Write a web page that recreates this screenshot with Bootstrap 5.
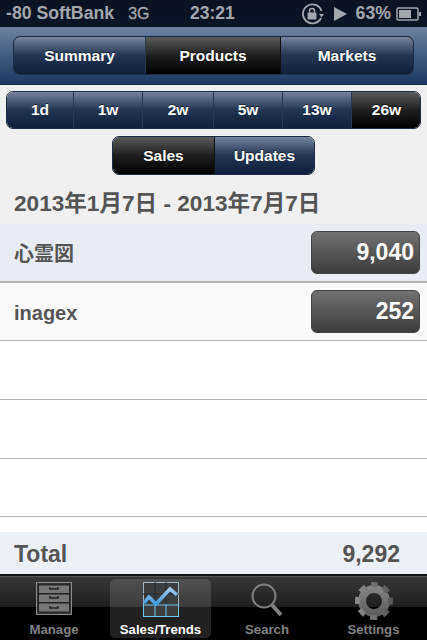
<!DOCTYPE html>
<html lang="en">
<head>
  <meta charset="UTF-8">
  <title>Sales/Trends</title>
  <link href="https://cdn.jsdelivr.net/npm/bootstrap@5.3.3/dist/css/bootstrap.min.css" rel="stylesheet">
  <style>
    body {
      width: 427px;
      height: 640px;
      overflow: hidden;
      background-color: #f0f0f0;
      font-family: "Liberation Sans", "Noto Sans CJK JP", sans-serif;
      font-weight: 700;
    }
    .status-bar {
      height: 27px;
      padding: 0 5px 0 6px;
      background: linear-gradient(#0b1220, #0a1526);
      color: #a3a7ad;
      font-size: 17.700px;
      line-height: 27px;
    }
    .status-net { font-size: 16px; margin-left: 14px; font-weight: 400; -webkit-text-stroke: .3px #a3a7ad; }
    .status-time { position: absolute; left: 190px; top: 0; font-size: 17.500px; }
    .status-right { margin-left: auto; }
    .status-play { margin: 0 9px; }
    .status-pct { margin-right: 5px; }
    .top-header {
      height: 58px;
      padding: 9px 13px 10px;
      background: linear-gradient(#6d819f, #1b3763);
      border-bottom: 1px solid #13294b;
    }
    .seg {
      display: flex;
      overflow: hidden;
      border-radius: 7px;
      border: 1px solid #1d2c44;
      color: #fff;
      font-size: 15.500px;
    }
    .seg-item {
      display: flex;
      flex: 1 1 0;
      align-items: center;
      justify-content: center;
      height: 100%;
      background: linear-gradient(#77849a, #233553 50%, #0f1f3c);
      border-right: 1px solid #2a3950;
      text-shadow: 0 -1px 0 rgba(0,0,0,.5);
    }
    .seg-item:last-child { border-right: 0; }
    .seg-item.on { background: linear-gradient(#5a5a5a, #1e1e1e 50%, #000); border-right-color: #111; }
    .seg-top { height: 39px; background: #1d2c44; }
    .seg-top .seg-item:nth-child(1) { flex: 0 0 132px; }
    .seg-top .seg-item:nth-child(2) { flex: 0 0 135px; }
    .seg-range { height: 38px; margin: 6px 6px 0; }
    .seg-range .seg-item { flex: 0 0 69px; }
    .seg-range .seg-item:nth-child(1) { flex: 0 0 67px; }
    .seg-range .seg-item:nth-child(3) { flex: 0 0 71px; }
    .seg-switch { height: 39px; width: 203px; margin: 7px auto 0; }
    .seg-switch .seg-item:first-child { flex: 0 0 102px; }
    .date-title {
      margin: 17px 0 0 14px;
      height: 32px;
      line-height: 24px;
      font-size: 22.600px;
      font-weight: 700;
      color: #555;
    }
    .sale-row {
      height: 59px;
      padding: 0 7px 0 14px;
      color: #555;
      font-size: 20px;
      border-bottom: 1px solid #b5b5b5;
      background: #fff;
    }
    .sale-name { padding-top: 2px; }
    .row-odd { background: #e9edf3; border-bottom-width: 2px; height: 59px; }
    .row-even { background: #fafafa; height: 58px; }
    .row-blank { height: 59px; }
    .row-blank-last { height: 58px; }
    .sale-pill {
      width: 109px;
      height: 43px;
      padding-right: 5px;
      border-radius: 6px;
      border: 1px solid #444;
      background: linear-gradient(#717171, #3c3c3c);
      color: #fff;
      font-size: 23px;
      line-height: 41px;
      text-align: right;
    }
    .gap-white { height: 15px; background: #fff; }
    .total-row {
      height: 42px;
      padding: 3px 27px 0 14px;
      background: #edf0f4;
      color: #555;
      font-size: 23px;
    }
    .tab-bar {
      height: 66px;
      padding-left: 3.500px;
      gap: 5.500px;
      border-top: 2px solid #111;
      box-shadow: inset 0 1px 0 #555;
      background: linear-gradient(#383838, #1e1e1e 31px, #000 31px);
      color: #808080;
      font-size: 13.200px;
    }
    .tab-item {
      width: 101px;
      margin-top: 3px;
      margin-bottom: 2px;
      padding-top: 3px;
      border-radius: 5px;
      line-height: 15px;
    }
    .tab-icon { height: 40px; }
    .tab-icon svg { display: block; margin: 0 auto; }
    .tab-item.on { background: rgba(255,255,255,.13); color: #fff; }
  </style>
</head>
<body>
  <div class="status-bar d-flex align-items-center position-relative">
    <span>-80 SoftBank</span>
    <span class="status-net">3G</span>
    <span class="status-time">23:21</span>
    <span class="status-right d-flex align-items-center">
      <svg width="24" height="22" viewBox="0 0 24 22">
        <path d="M20 15A9.5 9.5 0 1 1 20.500 8" fill="none" stroke="#a3a7ad" stroke-width="1.800"/>
        <path d="M18 11l5 0-2.500 3.500z" fill="#a3a7ad"/>
        <rect x="6.500" y="9.500" width="9" height="7" rx="1" fill="#a3a7ad"/>
        <path d="M8.500 9.500V8a2.500 2.500 0 0 1 5 0v1.500" fill="none" stroke="#a3a7ad" stroke-width="1.500"/>
      </svg>
      <svg class="status-play" width="13" height="14" viewBox="0 0 13 14"><path d="M0 0l13 7-13 7z" fill="#a3a7ad"/></svg>
      <span class="status-pct">63%</span>
      <svg width="26" height="14" viewBox="0 0 26 14">
        <rect x="1" y="1" width="21" height="12" rx="1.500" fill="none" stroke="#a3a7ad" stroke-width="1.500"/>
        <rect x="3" y="3" width="12" height="8" fill="#a3a7ad"/>
        <rect x="23" y="5" width="2" height="4" fill="#a3a7ad"/>
      </svg>
    </span>
  </div>

  <div class="top-header">
    <div class="seg seg-top">
      <div class="seg-item">Summary</div>
      <div class="seg-item on">Products</div>
      <div class="seg-item">Markets</div>
    </div>
  </div>

  <div class="seg seg-range">
    <div class="seg-item">1d</div>
    <div class="seg-item">1w</div>
    <div class="seg-item">2w</div>
    <div class="seg-item">5w</div>
    <div class="seg-item">13w</div>
    <div class="seg-item on">26w</div>
  </div>

  <div class="seg seg-switch">
    <div class="seg-item on">Sales</div>
    <div class="seg-item">Updates</div>
  </div>

  <div class="date-title">2013年1月7日 - 2013年7月7日</div>

  <div class="sale-row row-odd d-flex align-items-center justify-content-between">
    <span class="sale-name">心霊図</span><div class="sale-pill">9,040</div>
  </div>
  <div class="sale-row row-even d-flex align-items-center justify-content-between">
    <span class="sale-name">inagex</span><div class="sale-pill">252</div>
  </div>
  <div class="sale-row row-blank"></div>
  <div class="sale-row row-blank"></div>
  <div class="sale-row row-blank-last"></div>
  <div class="gap-white"></div>

  <div class="total-row d-flex align-items-center justify-content-between">
    <span>Total</span><span>9,292</span>
  </div>

  <div class="tab-bar d-flex text-center">
    <div class="tab-item">
      <div class="tab-icon">
        <svg width="36" height="33" viewBox="0 0 36 33">
          <rect x=".5" y=".5" width="35" height="32" fill="#333" stroke="#8a8a8a"/>
          <g fill="#777" stroke="#222"><rect x="2.500" y="3" width="31" height="8.500"/><rect x="2.500" y="12" width="31" height="8.500"/><rect x="2.500" y="21" width="31" height="9"/></g>
          <g fill="none" stroke="#222" stroke-width="1.500"><path d="M14 5v2h8V5"/><path d="M14 14v2h8v-2"/><path d="M14 24v2h8v-2"/></g>
        </svg>
      </div>
      Manage
    </div>
    <div class="tab-item on">
      <div class="tab-icon">
        <svg width="36" height="35" viewBox="0 0 36 35">
          <defs>
            <linearGradient id="chartLine" x1="0" y1="0" x2="0" y2="1"><stop offset="0" stop-color="#9fc8ea"/><stop offset="1" stop-color="#3f9de8"/></linearGradient>
          </defs>
          <rect x=".5" y=".5" width="35" height="34" fill="#3d3d3d" stroke="#9fb6c4"/>
          <path d="M12 0v23M23 0v23M0 12h36" stroke="#1f2a30" fill="none"/>
          <path d="M12 23v12M23 23v12M0 23h36M.5 23v12M35.500 23v12M0 34.500h36" stroke="#6fc6f2" fill="none"/>
          <path d="M1 21l5-6 7 7 14-15 7 6" fill="none" stroke="url(#chartLine)" stroke-width="3.500"/>
        </svg>
      </div>
      Sales/Trends
    </div>
    <div class="tab-item">
      <div class="tab-icon">
        <svg width="34" height="35" viewBox="0 0 34 35">
          <circle cx="14" cy="14" r="11.500" fill="none" stroke="#7f7f7f" stroke-width="2"/>
          <path d="M22 23l9 10" stroke="#7f7f7f" stroke-width="4"/>
        </svg>
      </div>
      Search
    </div>
    <div class="tab-item">
      <div class="tab-icon">
        <svg width="40" height="38" viewBox="0 0 40 38">
          <defs>
            <linearGradient id="gearFill" gradientUnits="userSpaceOnUse" x1="0" y1="0" x2="0" y2="38"><stop offset="0" stop-color="#8c8c8c"/><stop offset="1" stop-color="#555"/></linearGradient>
          </defs>
          <circle cx="20" cy="19" r="12" fill="none" stroke="url(#gearFill)" stroke-width="8"/>
          <circle cx="20" cy="19" r="16.500" fill="none" stroke="url(#gearFill)" stroke-width="5" stroke-dasharray="7 5.960" stroke-dashoffset="3.500" transform="rotate(-90 20 19)"/>
        </svg>
      </div>
      Settings
    </div>
  </div>

  <script src="https://cdn.jsdelivr.net/npm/bootstrap@5.3.3/dist/js/bootstrap.bundle.min.js"></script>
</body>
</html>
